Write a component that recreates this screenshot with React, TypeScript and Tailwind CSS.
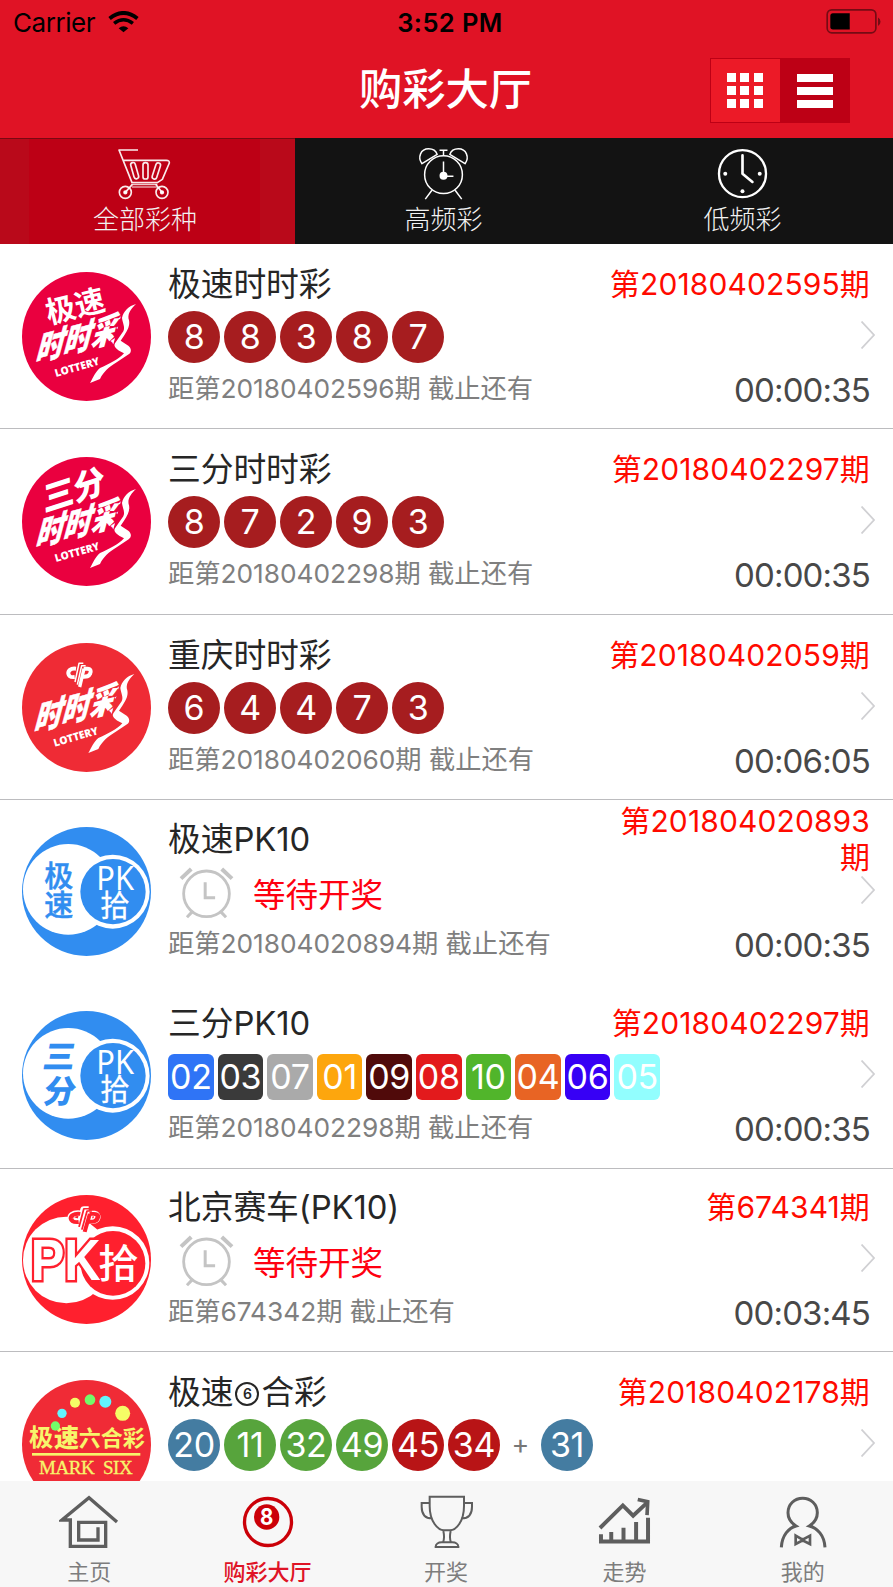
import React from "react";

type Ball = { n: string; c: string };
type RowData = {
  title: React.ReactNode;
  period: React.ReactNode;
  next: string;
  timer: string;
  logo: React.ReactNode;
  draw: React.ReactNode;
  box: string;
};

const CJK = '"Noto Sans CJK SC", sans-serif';

function Welfare({ color, outline }: { color: string; outline?: string }) {
  return (
    <g fill="none" strokeLinejoin="round">
      {outline && (
        <path d="M28 18C10 16 4 26 6 34C8 44 16 46 24 46M26 60L38 5H50M42 72L53 19H64C76 22 72 42 62 42H50" stroke={outline} strokeWidth="17" />
      )}
      <path d="M29 20C12 18 5 26 6 35C8 46 16 46 25 45" stroke={color} strokeWidth="12" />
      <path d="M26 60L38 4H51" stroke={color} strokeWidth="4.500" />
      <path d="M33 68L46 11H58" stroke={color} strokeWidth="4.500" />
      <path d="M40 75L53 20" stroke={color} strokeWidth="10" />
      <path d="M52 20H63C74 20 75 28 71 36C67 45 60 44 49 44" stroke={color} strokeWidth="12" />
    </g>
  );
}

function SscLogo({ name, bg, id }: { name?: string; bg: string; id: string }) {
  return (
    <svg viewBox="0 0 387 387" className="size-[129px] shrink-0">
      <circle cx="193.500" cy="193.500" r="193.500" fill={bg} />
      <clipPath id={id}>
        <rect x="0" y="-100" width="60" height="130" />
      </clipPath>
      {name === "极速" && (
        <text transform="translate(80 156) rotate(-14)" fontFamily={CJK} fontWeight="700" fontSize="90" fill="#fff">{name}</text>
      )}
      {name === "三分" && (
        <text transform="translate(66 165) rotate(-18) skewX(-14)" fontFamily={CJK} fontWeight="900" fontSize="98" fill="#fff" textLength="194">{name}</text>
      )}
      {!name && (
        <g transform="translate(133 57)">
          <Welfare color="#fff" />
        </g>
      )}
      <g transform={name ? "translate(38 271) rotate(-15) skewX(-30)" : "translate(33 267) rotate(-15) skewX(-30)"}>
        <text fontFamily={CJK} fontWeight="900" fontSize="98" fill="#fff" stroke="#fff" strokeWidth="1.500" textLength="172" lengthAdjust="spacingAndGlyphs">时时</text>
        <g transform="translate(172 0) scale(1.25 1)">
          <text fontFamily={CJK} fontWeight="900" fontSize="98" fill="#fff" clipPath={`url(#${id})`}>彩</text>
        </g>
      </g>
      <text transform={name ? "translate(102 315) rotate(-16)" : "translate(98 311) rotate(-16)"} fontFamily='"Open Sans", sans-serif' fontWeight="800" fontSize="32" fill="#fff" textLength="138" lengthAdjust="spacingAndGlyphs">LOTTERY</text>
      <path
        transform={name ? undefined : "translate(-5 -3)"}
        d="M342 96C320 102 304 118 300 138C302 155 310 165 304 178L279 214C274 222 280 232 306 244C290 262 262 276 234 288C220 300 214 316 204 333L234 321C244 300 262 284 284 271L320 247C330 240 328 228 319 221L296 206L306 191C318 174 324 160 321 145C315 128 325 112 342 96Z"
        fill="#fff"
      />
    </svg>
  );
}

function PkBlueLogo({ name }: { name: string }) {
  const slanted = name === "三分";
  return (
    <svg viewBox="0 0 387 387" className="size-[129px] shrink-0">
      <circle cx="193.500" cy="193.500" r="193.500" fill="#318df0" />
      <circle cx="139" cy="187" r="136" fill="#fff" />
      <circle cx="272" cy="194" r="111" fill="#fff" />
      <circle cx="273" cy="194" r="98" fill="#318df0" />
      <g fontFamily={CJK} fontWeight={slanted ? 900 : 500} fontSize={slanted ? 96 : 87} fill="#318df0" stroke="#318df0" strokeWidth={slanted ? 0 : 1.5}>
        <text transform={slanted ? "translate(59 172) skewX(-10)" : "translate(67 181)"}>{name[0]}</text>
        <text transform={slanted ? "translate(60 275) skewX(-10)" : "translate(67 267)"}>{name[1]}</text>
      </g>
      <text x="223" y="190" fontFamily='"Noto Sans", sans-serif' fontSize="98" fill="#fff" textLength="113" lengthAdjust="spacingAndGlyphs">PK</text>
      <text x="235" y="267" fontFamily={CJK} fontSize="88" fill="#fff" stroke="#fff" strokeWidth="1">拾</text>
    </svg>
  );
}

function PkRedLogo() {
  return (
    <svg viewBox="0 0 387 387" className="size-[129px] shrink-0">
      <circle cx="193.500" cy="193.500" r="193.500" fill="#ff202e" />
      <circle cx="133" cy="195" r="130" fill="#fff" />
      <circle cx="272" cy="204" r="110" fill="#fff" />
      <circle cx="273" cy="205" r="97" fill="#ff202e" />
      <g transform="translate(140 37) scale(1.2 .98)">
        <Welfare color="#ff202e" outline="#fff" />
      </g>
      <text x="26" y="256" fontFamily='"Liberation Sans", sans-serif' fontWeight="700" fontSize="170" fill="#fff" stroke="#ff202e" strokeWidth="15" paintOrder="stroke" textLength="210" lengthAdjust="spacingAndGlyphs">PK</text>
      <text x="229" y="250" fontFamily={CJK} fontWeight="500" fontSize="121" fill="#fff">拾</text>
    </svg>
  );
}

function MarkSixLogo() {
  return (
    <svg viewBox="0 0 387 387" className="size-[129px] shrink-0">
      <circle cx="193.500" cy="193.500" r="193.500" fill="#f02b36" />
      <g fontFamily={CJK} fill="#f7f56b">
        <text x="21" y="198" fontSize="73" fontWeight="700">极</text>
        <text x="96" y="200" fontSize="75" fontWeight="900">速</text>
        <text x="170" y="199" fontSize="66" fontWeight="700" textLength="198">六合彩</text>
      </g>
      <circle cx="100" cy="138" r="14" fill="#73fb6a" />
      <circle cx="120" cy="100" r="14" fill="#62f5fd" />
      <circle cx="159" cy="68" r="15" fill="#f5fc66" />
      <circle cx="204" cy="59" r="16" fill="#73fb6a" />
      <circle cx="250" cy="65" r="18" fill="#62f5fd" />
      <circle cx="302" cy="100" r="22.500" fill="#f5fc66" />
      <rect x="30" y="219" width="325" height="8" fill="#f7f56b" />
      <text x="51" y="282" fontFamily='"Liberation Serif", serif' fontSize="57" fill="#f7f56b" stroke="#f7f56b" strokeWidth="1" textLength="281" xmlSpace="preserve">MARK  SIX</text>
    </svg>
  );
}

function Circles({ items }: { items: Ball[] }) {
  return (
    <div className="flex gap-[4px]">
      {items.map((b, i) => (
        <span key={i} className={`flex size-[52px] items-center justify-center rounded-full text-[34px] leading-none tracking-[-0.300px] text-white ${b.c}`}>
          {b.n}
        </span>
      ))}
    </div>
  );
}

function red(s: string): Ball[] {
  return s.split("").map((n) => ({ n, c: "bg-[#a61d1f]" }));
}

function Waiting() {
  return (
    <div className="flex items-center pt-[4px] pl-[11px]">
      <svg viewBox="538 200 166 160" className="-mt-[1px] h-[53px] w-[55px]" fill="none" stroke="#c4c4c4">
        <circle cx="621" cy="281" r="69" strokeWidth="8.500" />
        <path d="M544 235L575 206M667 206L698 235" strokeWidth="12" />
        <path d="M579 334L562 352M663 334L680 352" strokeWidth="9" />
        <path d="M617 246V293H647" strokeWidth="9" />
      </svg>
      <span className="mt-[4px] ml-[19px] text-[32.500px] leading-[40px] text-[#ff0010]">等待开奖</span>
    </div>
  );
}

const squares: Ball[] = [
  { n: "02", c: "bg-[#2f74f6]" },
  { n: "03", c: "bg-[#3a3a3a]" },
  { n: "07", c: "bg-[#aaaaaa]" },
  { n: "01", c: "bg-[#fda60d]" },
  { n: "09", c: "bg-[#500a0a]" },
  { n: "08", c: "bg-[#e31a1c]" },
  { n: "10", c: "bg-[#51b52b]" },
  { n: "04", c: "bg-[#e86424]" },
  { n: "06", c: "bg-[#3700f5]" },
  { n: "05", c: "bg-[#92fefe]" },
];

const six: Ball[] = [
  { n: "20", c: "bg-[#447ca1]" },
  { n: "11", c: "bg-[#57a43c]" },
  { n: "32", c: "bg-[#57a43c]" },
  { n: "49", c: "bg-[#57a43c]" },
  { n: "45", c: "bg-[#b81416]" },
  { n: "34", c: "bg-[#b81416]" },
];

const rows: RowData[] = [
  { title: "极速时时彩", period: "第20180402595期", next: "20180402596", timer: "00:00:35", logo: <SscLogo name="极速" bg="#ea003f" id="ssc-a" />, draw: <Circles items={red("88387")} />, box: "h-[185px] pt-[28px] border-b" },
  { title: "三分时时彩", period: "第20180402297期", next: "20180402298", timer: "00:00:35", logo: <SscLogo name="三分" bg="#ea003f" id="ssc-b" />, draw: <Circles items={red("87293")} />, box: "h-[186px] pt-[28px] border-b" },
  { title: "重庆时时彩", period: "第20180402059期", next: "20180402060", timer: "00:06:05", logo: <SscLogo bg="#ef2b35" id="ssc-c" />, draw: <Circles items={red("64473")} />, box: "h-[185px] pt-[28px] border-b" },
  { title: "极速PK10", period: <>第201804020893<br />期</>, next: "201804020894", timer: "00:00:35", logo: <PkBlueLogo name="极速" />, draw: <Waiting />, box: "h-[184px] pt-[27px]" },
  {
    title: "三分PK10", period: "第20180402297期", next: "20180402298", timer: "00:00:35", logo: <PkBlueLogo name="三分" />,
    draw: (
      <div className="flex gap-[4px] pt-[3px]">
        {squares.map((b) => (
          <span key={b.n} className={`flex h-[45.500px] w-[45.600px] items-center justify-center rounded-[6px] text-[34px] leading-none tracking-[-0.300px] text-white ${b.c}`}>{b.n}</span>
        ))}
      </div>
    ),
    box: "h-[185px] pt-[27px] border-b",
  },
  { title: "北京赛车(PK10)", period: "第674341期", next: "674342", timer: "00:03:45", logo: <PkRedLogo />, draw: <Waiting />, box: "h-[183px] pt-[26px] border-b" },
  {
    title: (
      <>极速<span className="mr-[2px] ml-[2px] inline-flex size-[24px] items-center justify-center rounded-full border-2 border-[#262626] align-[5px] text-[14px] leading-none font-semibold">6</span>合彩</>
    ),
    period: "第20180402178期", next: "20180402179", timer: "00:00:35", logo: <MarkSixLogo />,
    draw: (
      <div className="flex items-center">
        <Circles items={six} />
        <span className="w-[41px] text-center text-[27px] leading-none text-[#777]">+</span>
        <Circles items={[{ n: "31", c: "bg-[#447ca1]" }]} />
      </div>
    ),
    box: "h-[185px] pt-[28px]",
  },
];

function Row({ r }: { r: RowData }) {
  return (
    <div className={`flex shrink-0 border-[#bcbcbf] pl-[22px] ${r.box}`}>
      {r.logo}
      <div className="-mt-[7px] ml-[17px] min-w-0 flex-1 whitespace-nowrap">
        <div className="h-[39px] text-[32.800px] leading-[39px] tracking-[-0.100px] text-[#262626]">{r.title}</div>
        <div className="mt-[6.500px] flex h-[52px] items-center">{r.draw}</div>
        <div className="mt-[6.500px] h-[40px] text-[26.300px] leading-[40px] tracking-[-0.040px] text-[#7f7f7f]">距第{r.next}期 截止还有</div>
      </div>
      <div className="-mt-[22px] flex w-[200px] shrink-0 flex-col items-end pr-[23px] whitespace-nowrap">
        <div className="flex h-[68px] items-center text-right text-[30px] leading-[36.500px] tracking-[0.120px] text-[#ff0a00]">
          <div>{r.period}</div>
        </div>
        <svg viewBox="0 0 14 28" className="mt-[3px] -mr-[5px] h-[28px] w-[14px]" fill="none" stroke="#d0d0d3" strokeWidth="1.800">
          <path d="M.5 .5L13 14L.5 27.500" />
        </svg>
        <div className="mt-[20px] h-[40px] text-[33px] leading-[42px] tracking-[-0.850px] text-[#484848]">{r.timer}</div>
      </div>
    </div>
  );
}

function Cart() {
  return (
    <svg viewBox="346 440 174 165" className="h-[55px] w-[58px]" fill="none" stroke="#fff" strokeOpacity=".92" strokeWidth="5" strokeLinejoin="round">
      <path d="M415 452H358L397 550H473L488 540L509 491Q510 483 500 483H371" />
      <path d="M397 556H473M397 563H473" strokeWidth="3" />
      <rect x="430" y="490" width="15" height="49" rx="7" />
      <rect x="-7" y="-25" width="14" height="50" rx="7" transform="translate(405 514) rotate(-16)" />
      <rect x="-7" y="-25" width="14" height="50" rx="7" transform="translate(470 515) rotate(18)" />
      <circle cx="377" cy="579" r="18" />
      <circle cx="487" cy="579" r="18" />
      <path d="M398 555L377 579M468 555L487 579" />
      <circle cx="377" cy="579" r="4" fill="#fff" />
      <circle cx="487" cy="579" r="4" fill="#fff" />
    </svg>
  );
}

function Alarm() {
  return (
    <svg viewBox="0 0 166 165" className="h-[55px] w-[55px]" fill="none" stroke="#fff" strokeWidth="4.500">
      <circle cx="83" cy="86" r="57" />
      <path d="M83 30V12M71 12H95M48 133L28 160M118 133L138 160" />
      <path d="M18 53C4 34 14 8 38 8C52 8 61 16 64 25Z" strokeLinejoin="round" />
      <path d="M148 53C162 34 152 8 128 8C114 8 105 16 102 25Z" strokeLinejoin="round" />
      <path d="M83 88V46M83 91H113" />
      <circle cx="83" cy="89" r="12" fill="#fff" stroke="none" />
    </svg>
  );
}

function Clock() {
  return (
    <svg viewBox="816 438 166 165" className="h-[55px] w-[55px]" fill="none" stroke="#fff">
      <circle cx="899" cy="521" r="71" strokeWidth="7" />
      <path d="M899 466V521L929 546" strokeWidth="8" strokeLinecap="round" strokeLinejoin="round" />
      <g fill="#fff" stroke="none">
        <circle cx="847" cy="521" r="6" />
        <circle cx="951" cy="521" r="6" />
        <circle cx="899" cy="574" r="6" />
      </g>
    </svg>
  );
}

function Tab({ icon, label, box }: { icon: React.ReactNode; label: string; box: string }) {
  return (
    <div className={`flex flex-col items-center pt-[7px] ${box}`}>
      {icon}
      <div className="mt-[1px] text-[26px] leading-[36px] font-light text-[#f2f2f2]">{label}</div>
    </div>
  );
}

function Nav({ icon, label, active }: { icon: React.ReactNode; label: string; active?: boolean }) {
  return (
    <div className={`flex flex-1 flex-col items-center pt-[13px] text-[22px] leading-[30px] ${active ? "font-medium text-[#df1426]" : "text-[#7d7d7d]"}`}>
      {icon}
      <div className="mt-[6.500px]">{label}</div>
    </div>
  );
}

export default function App() {
  return (
    <div className='flex h-[1587px] w-[893px] flex-col overflow-hidden bg-white font-[Inter,"Noto_Sans_CJK_SC",sans-serif]'>
      <header className="h-[138px] shrink-0 bg-[#e01325]">
        <div className="grid h-[46px] grid-cols-[1fr_auto_1fr] items-center pl-[13px] text-[26px] text-black">
          <div className="-mt-[1px] flex items-center gap-[12.500px]">
            <span className="tracking-[-0.450px]">Carrier</span>
            <svg viewBox="322 31 94 68" className="-mt-[1px] h-[22px] w-[31px]" fill="none" stroke="#000">
              <path d="M326 54Q369 20 412 54" strokeWidth="12" />
              <path d="M340 69Q369 47 398 69" strokeWidth="11" />
              <path d="M354 84Q369 72 384 84L369 97Z" fill="#000" stroke="none" />
            </svg>
          </div>
          <span className="-ml-[6px] text-[25.500px] font-semibold tracking-[0.400px]">3:52 PM</span>
          <svg viewBox="0 0 168 76" className="-mt-[3px] mr-[11.500px] h-[25px] w-[56px] justify-self-end">
            <rect x="2.500" y="2.500" width="148" height="70" rx="14" fill="none" stroke="#750b14" strokeWidth="5" />
            <path d="M157 26a12 14 0 0 1 0 26Z" fill="#750b14" />
            <path d="M20 13H71V62H20Q12 62 12 54V21Q12 13 20 13Z" fill="#000" />
          </svg>
        </div>
        <div className="grid h-[92px] grid-cols-[1fr_auto_1fr] items-start pt-[12px]">
          <h1 className="col-start-2 mt-[1px] -ml-[2px] text-[43.300px] leading-[60px] font-medium text-white">购彩大厅</h1>
          <div className="mr-[43px] flex h-[65px] w-[140px] justify-self-end border border-[#bd0015]">
            <div className="flex w-[69px] items-center justify-center bg-[#ec1a27] pr-[2px]">
              <div className="grid grid-cols-3 gap-x-[4.500px] gap-y-[4px]">
                {Array.from({ length: 9 }, (_, i) => <i key={i} className="size-[9px] bg-white" />)}
              </div>
            </div>
            <div className="flex flex-1 flex-col items-center justify-center gap-[5px] bg-[#bd0015] pt-[1px]">
              <i className="h-[8px] w-[36px] bg-white" />
              <i className="h-[8px] w-[36px] bg-white" />
              <i className="h-[8px] w-[36px] bg-white" />
            </div>
          </div>
        </div>
      </header>

      <div className="flex h-[106px] shrink-0 bg-[#131313]">
        <Tab icon={<div className="pr-[2px]"><Cart /></div>} label="全部彩种" box="w-[295px] border-t border-[#7a0812] pr-[5px] bg-[linear-gradient(90deg,#b9091a_29px,#bd0015_29px,#bd0015_260px,#b9091a_260px)]" />
        <Tab icon={<Alarm />} label="高频彩" box="w-[297px] border-t border-[#131313]" />
        <Tab icon={<Clock />} label="低频彩" box="flex-1 border-t border-[#131313]" />
      </div>

      <main className="flex min-h-0 flex-1 flex-col overflow-hidden">
        {rows.map((r, i) => <Row key={i} r={r} />)}
      </main>

      <footer className="flex h-[106px] shrink-0 bg-[#f7f7f7] pr-[1px]">
        <Nav label="主页" icon={
          <svg viewBox="177 432 180 168" className="h-[56px] w-[60px]" fill="none" stroke="#5e5e5e" strokeWidth="10">
            <path d="M351 516L267 443L186 510H211V589H317V517H236V570H294V532" />
          </svg>} />
        <Nav active label="购彩大厅" icon={
          <svg viewBox="720 432 168 168" className="size-[56px]">
            <circle cx="804" cy="516" r="70.500" fill="none" stroke="#cb0008" strokeWidth="10" />
            <circle cx="800" cy="501" r="38" fill="#cb0008" />
            <text x="780" y="526" fontFamily="Inter, sans-serif" fontWeight="700" fontSize="70" fill="#fff" textLength="40" lengthAdjust="spacingAndGlyphs">8</text>
          </svg>} />
        <Nav label="开奖" icon={
          <svg viewBox="-84 432 180 168" className="h-[56px] w-[60px]" fill="none" stroke="#5e5e5e" strokeWidth="6">
            <path d="M-43 440H60V468C60 515 36 541 18 541H0C-18 541 -43 515 -43 468Z" />
            <path d="M-43 459H-67V470C-67 495 -57 505 -36 505M60 459H84V470C84 495 74 505 53 505" />
            <path d="M-2 543C2 560 0 570 -3 577M20 543C16 560 18 570 21 577M-25 591C-25 582 -17 577 -7 577H25C35 577 43 582 43 591M-28 591H46" />
          </svg>} />
        <Nav label="走势" icon={
          <svg viewBox="458 432 172 168" className="h-[56px] w-[57px]" fill="none" stroke="#5e5e5e">
            <path d="M470 534L539 466L570 497L614 456" strokeWidth="12" />
            <path d="M584 448L614 455L612 495" strokeWidth="11" />
            <path d="M473 553V575H615V503" strokeWidth="12" />
            <path d="M504 546V575M541 533V575M579 516V575" strokeWidth="12" />
          </svg>} />
        <Nav label="我的" icon={
          <svg viewBox="997 432 168 168" className="size-[56px]" fill="none" stroke="#5e5e5e" strokeWidth="9">
            <path d="M1016 592C1018 556 1038 534 1060 528C1040 515 1036 502 1036 488C1036 462 1056 445 1080 445C1104 445 1124 462 1124 488C1124 502 1120 515 1100 528C1124 534 1145 556 1147 592" />
            <path d="M1059 557L1076 567H1084L1102 557V582L1084 573H1076L1059 582Z" strokeWidth="8" />
          </svg>} />
      </footer>
    </div>
  );
}
